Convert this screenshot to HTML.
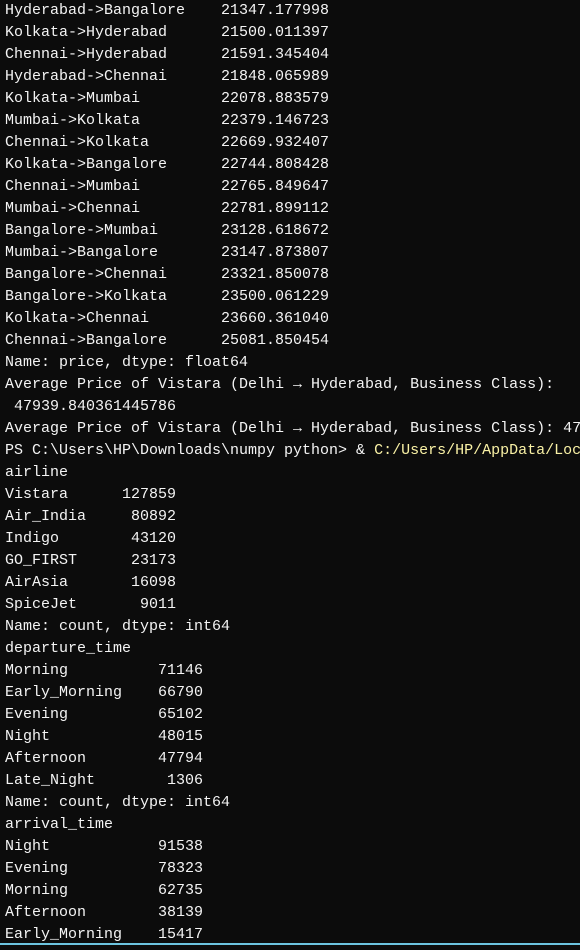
<!DOCTYPE html>
<html><head><meta charset="utf-8"><style>
html,body{margin:0;padding:0;background:#0c0c0c;width:580px;height:950px;overflow:hidden}
pre{margin:0;position:absolute;left:5px;top:0px;width:575px;overflow:hidden;font-family:"Liberation Mono","DejaVu Sans Mono",monospace;font-size:15px;line-height:22px;color:#f4f4f4;white-space:pre}
.y{color:#f9f1a5}
.bar{position:absolute;left:0;top:943px;width:580px;height:2px;background:#6cc4e0}
</style></head><body>
<pre>Hyderabad-&gt;Bangalore    21347.177998
Kolkata-&gt;Hyderabad      21500.011397
Chennai-&gt;Hyderabad      21591.345404
Hyderabad-&gt;Chennai      21848.065989
Kolkata-&gt;Mumbai         22078.883579
Mumbai-&gt;Kolkata         22379.146723
Chennai-&gt;Kolkata        22669.932407
Kolkata-&gt;Bangalore      22744.808428
Chennai-&gt;Mumbai         22765.849647
Mumbai-&gt;Chennai         22781.899112
Bangalore-&gt;Mumbai       23128.618672
Mumbai-&gt;Bangalore       23147.873807
Bangalore-&gt;Chennai      23321.850078
Bangalore-&gt;Kolkata      23500.061229
Kolkata-&gt;Chennai        23660.361040
Chennai-&gt;Bangalore      25081.850454
Name: price, dtype: float64
Average Price of Vistara (Delhi → Hyderabad, Business Class):
 47939.840361445786
Average Price of Vistara (Delhi → Hyderabad, Business Class): 47
PS C:\Users\HP\Downloads\numpy python&gt; &amp; <span class="y">C:/Users/HP/AppData/Loc</span>
airline
Vistara      127859
Air_India     80892
Indigo        43120
GO_FIRST      23173
AirAsia       16098
SpiceJet       9011
Name: count, dtype: int64
departure_time
Morning          71146
Early_Morning    66790
Evening          65102
Night            48015
Afternoon        47794
Late_Night        1306
Name: count, dtype: int64
arrival_time
Night            91538
Evening          78323
Morning          62735
Afternoon        38139
Early_Morning    15417</pre>
<div class="bar"></div>
</body></html>
